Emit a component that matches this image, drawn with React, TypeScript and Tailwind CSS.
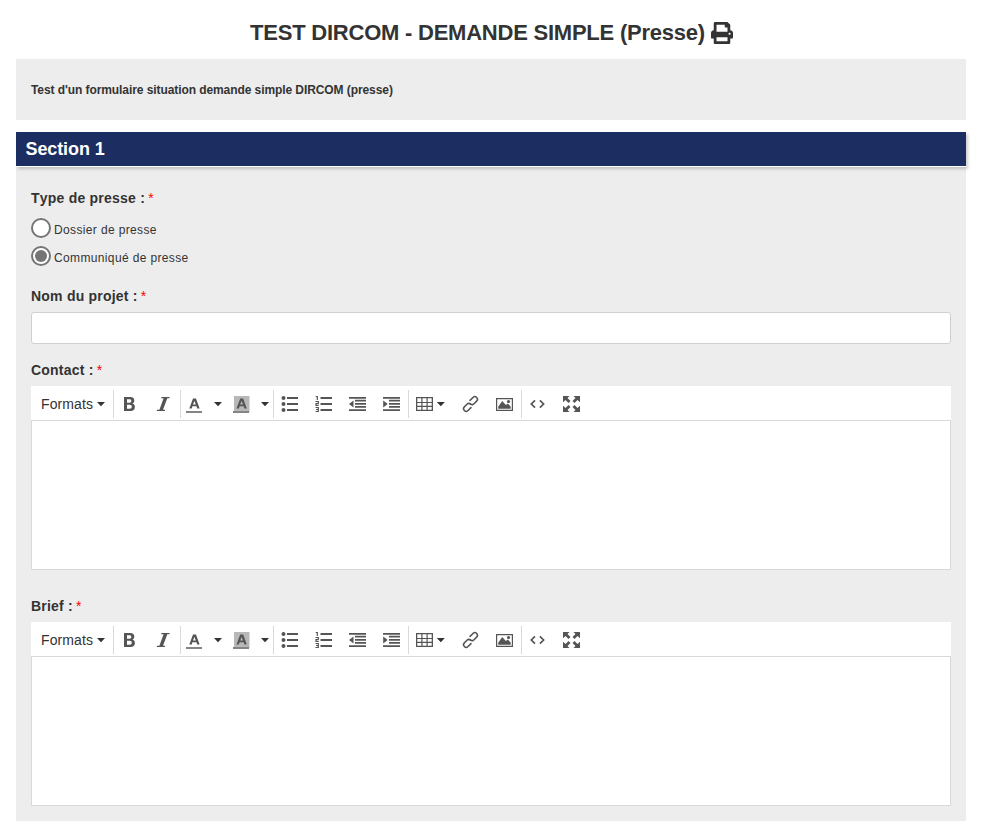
import React from "react";

const INK = "#555555";

function Caret({ x }: { x: number }) {
  return <path d={`M${x} 12h8l-4 4.300z`} fill="#333" />;
}

function Tool({ w, label, children }: { w: number; label: string; children: React.ReactNode }) {
  return (
    <button type="button" aria-label={label} className="shrink-0">
      <svg width={w} height="28" viewBox={`0 0 ${w} 28`} fill={INK} className="block">
        {children}
      </svg>
    </button>
  );
}

function Group({ children }: { children: React.ReactNode }) {
  return <div className="flex h-7 border-l border-[#d9d9d9]">{children}</div>;
}

function Toolbar() {
  return (
    <div className="flex h-[34px] items-center bg-white pt-[2px]">
      <button type="button" className="flex h-7 w-[82px] shrink-0 items-center pl-[10px] text-[14px] leading-5 text-[#333]">
        <span className="w-[52px] whitespace-nowrap tracking-[0.1px]">Formats</span>
        <svg width="14" height="28" viewBox="0 0 14 28"><Caret x={4} /></svg>
      </button>
      <Group>
        <Tool w={32} label="Gras">
          <path fillRule="evenodd" d="M10 7h6.500c2.400 0 3.800 1.300 3.800 3.500 0 1.500-.7 2.600-1.800 3 1.500.4 2.400 1.600 2.400 3.400 0 2.600-1.700 4.100-4.300 4.100H10zM13 9.200v3.500h2.500c1.200 0 1.800-.6 1.800-1.700 0-1.200-.6-1.800-1.800-1.800zm0 5.600v4h2.800c1.300 0 2-.7 2-2s-.7-2-2-2z" />
        </Tool>
        <Tool w={34} label="Italique">
          <path d="M15.500 7h8.200l-.4 1.300h-2L17 19.700h2.200l-.4 1.300H10.700l.4-1.300h2.300l4.200-11.400h-2.500z" />
        </Tool>
      </Group>
      <Group>
        <Tool w={47} label="Couleur du texte">
          <path fillRule="evenodd" d="M12 8.500h3l3.600 10h-2.400l-.7-2.300h-4.100l-.7 2.300H8.300zm1.400 2.400-1.400 3.700h2.800z" />
          <path d="M5 21h16v2H5z" fill="#858585" />
          <Caret x={33} />
        </Tool>
        <Tool w={45} label="Couleur de fond">
          <path d="M6 6h15.500v16H6z" fill="#b8b8b8" />
          <path fillRule="evenodd" d="M12.200 8.500h3l3.600 10h-2.400l-.7-2.300h-4.100l-.7 2.300H8.500zm1.400 2.400-1.400 3.700H15z" />
          <path d="M5 21h16v2H5z" fill="#858585" />
          <Caret x={33} />
        </Tool>
      </Group>
      <Group>
        <Tool w={33} label="Liste à puces">
          <circle cx="9.500" cy="8" r="2" /><circle cx="9.500" cy="14" r="2" /><circle cx="9.500" cy="20" r="2" />
          <path d="M13 7h11v2H13zM13 13h11v2H13zM13 19h11v2H13z" />
        </Tool>
        <Tool w={34} label="Liste numérotée">
          <path d="M13.500 7H25v2H13.500zM13.500 13H25v2H13.500zM13.500 19H25v2H13.500z" />
          <path d="M8.700 6.500h1.600V10M8.500 11.500h2.800v2.200H9v1.800h2.700M8.500 17.500h2.800v4H8.500M9 19.500h2.200" fill="none" stroke={INK} strokeWidth="1.200" />
        </Tool>
        <Tool w={34} label="Diminuer le retrait">
          <path d="M8 7h17v1.700H8zM14 9.800h11v1.800H14zM14 12.900h11v1.800H14zM14 16h11v1.800H14zM8 19.200h17V21H8zM12.500 10.500v7L8 14z" />
        </Tool>
        <Tool w={33} label="Augmenter le retrait">
          <path d="M8 7h17v1.700H8zM14 9.800h11v1.800H14zM14 12.900h11v1.800H14zM14 16h11v1.800H14zM8 19.200h17V21H8zM8.200 10.500v7l4.500-3.500z" />
        </Tool>
      </Group>
      <Group>
        <Tool w={45} label="Tableau">
          <path fillRule="evenodd" d="M7 7h17v14H7zm1.300 1.300V12h4V8.300zm5.200 0V12h4V8.300zm5.200 0V12h4V8.300zM8.300 13v2.800h4V13zm5.200 0v2.800h4V13zm5.200 0v2.800h4V13zM8.300 17v2.800h4V17zm5.200 0v2.800h4V17zm5.200 0v2.800h4V17z" />
          <Caret x={27.800} />
        </Tool>
        <Tool w={34} label="Lien">
          <g transform="translate(16.500 14) rotate(-45)" fill="none" stroke={INK} strokeWidth="1.500" strokeLinecap="round">
            <path d="M-1.500 2.600h-4.200a2.600 2.600 0 0 1 0-5.200h3.700a2.600 2.600 0 0 1 2.600 2.600" transform="translate(-.7 .3)" />
            <path d="M1.500-2.600h4.200a2.600 2.600 0 0 1 0 5.200H2a2.600 2.600 0 0 1-2.600-2.600" transform="translate(.7 -.3)" />
          </g>
        </Tool>
        <Tool w={33} label="Image">
          <path fillRule="evenodd" d="M8 8h17v13H8zm1.200 1.200v10.600h14.600V9.200z" />
          <path d="M10.200 18.700v-2l4-5.700 3.700 4 2-1.500 2.800 3.200v2z" /><circle cx="20.500" cy="11.500" r="1.600" />
        </Tool>
      </Group>
      <Group>
        <Tool w={32} label="Code source">
          <path d="M13 10.300 9.300 14l3.700 3.700M17.900 10.300l3.700 3.700-3.700 3.700" fill="none" stroke={INK} strokeWidth="1.700" />
        </Tool>
        <Tool w={34} label="Plein écran">
          <path d="M9 6h6.500l-2 2 3 3-2 2-3-3L9 12.200zM26 6h-6.500l2 2-3 3 2 2 3-3 2.500 2.200zM9 22h6.500l-2-2 3-3-2-2-3 3L9 15.800zM26 22h-6.500l2-2-3-3 2-2 3 3 2.500-2.200z" />
        </Tool>
      </Group>
    </div>
  );
}

function Label({ children }: { children: React.ReactNode }) {
  return (
    <div className="h-5 whitespace-nowrap text-[14px] font-bold leading-5 tracking-[0.22px] [font-kerning:none]">
      {children} : <span className="-ml-px text-[14px] font-normal leading-none text-[#ff0000]">*</span>
    </div>
  );
}

function Editor({ title }: { title: string }) {
  return (
    <section>
      <Label>{title}</Label>
      <div className="mt-[6px]">
        <Toolbar />
        <div className="h-[150px] border border-[#d9d9d9] bg-white" />
      </div>
    </section>
  );
}

function Radio({ label, checked }: { label: string; checked?: boolean }) {
  return (
    <label className="flex h-7 items-center">
      <span className="flex size-5 shrink-0 items-center justify-center rounded-full border-2 border-[#757575] bg-white">
        {checked && <span className="size-3 rounded-full bg-[#757575]" />}
      </span>
      <span className="ml-[3px] whitespace-nowrap pt-[4px] text-[12px] leading-5 tracking-[0.36px]">{label}</span>
    </label>
  );
}

export default function App() {
  return (
    <main className="h-[831px] w-[983px] overflow-hidden bg-white px-4 font-['Liberation_Sans',Arial,sans-serif] text-[#333]">
      <h1 className="flex h-[59px] items-center justify-center pt-[7px] text-[22px] font-bold leading-6">
        <span className="whitespace-nowrap tracking-[-0.23px]">TEST DIRCOM - DEMANDE SIMPLE (Presse)</span>
        <svg className="ml-[6px] shrink-0" width="22" height="22" viewBox="0 0 512 512" fill="#333">
          <path d="M448 192V77.250c0-8.490-3.370-16.620-9.370-22.630L393.370 9.370c-6-6-14.140-9.370-22.630-9.370H96C78.330 0 64 14.330 64 32v160c-35.350 0-64 28.650-64 64v112c0 8.840 7.160 16 16 16h48v96c0 17.670 14.330 32 32 32h320c17.670 0 32-14.330 32-32v-96h48c8.840 0 16-7.160 16-16V256c0-35.350-28.650-64-64-64zm-64 256H128v-96h256v96zm0-224H128V64h192v48c0 8.840 7.160 16 16 16h48v96zm48 72c-13.250 0-24-10.750-24-24 0-13.260 10.750-24 24-24s24 10.740 24 24c0 13.250-10.750 24-24 24z" />
        </svg>
      </h1>
      <div className="w-[950px]">
        <p className="flex h-[61px] items-center bg-[#ededed] px-[15px] text-[12px] font-bold tracking-[-0.08px]">Test d'un formulaire situation demande simple DIRCOM (presse)</p>
        <h2 className="relative mt-3 flex h-[35px] items-center border-b border-white bg-[#1c2e61] pl-[9.500px] text-[18px] font-bold tracking-[-0.1px] text-white shadow-[2px_2px_3px_rgba(0,0,0,0.2)]">Section 1</h2>
        <div className="h-[654px] bg-[#ededed] px-[15px] pt-[21px]">
          <Label>Type de presse</Label>
          <div className="mt-[6px]">
            <Radio label="Dossier de presse" />
            <Radio label="Communiqué de presse" checked />
          </div>
          <div className="mt-4">
            <Label>Nom du projet</Label>
            <input aria-label="Nom du projet" className="mt-[6px] block h-8 w-full rounded-[3px] border border-[#d0d0d0] bg-white outline-none" />
          </div>
          <div className="mt-4"><Editor title="Contact" /></div>
          <div className="mt-[26px]"><Editor title="Brief" /></div>
        </div>
      </div>
    </main>
  );
}
